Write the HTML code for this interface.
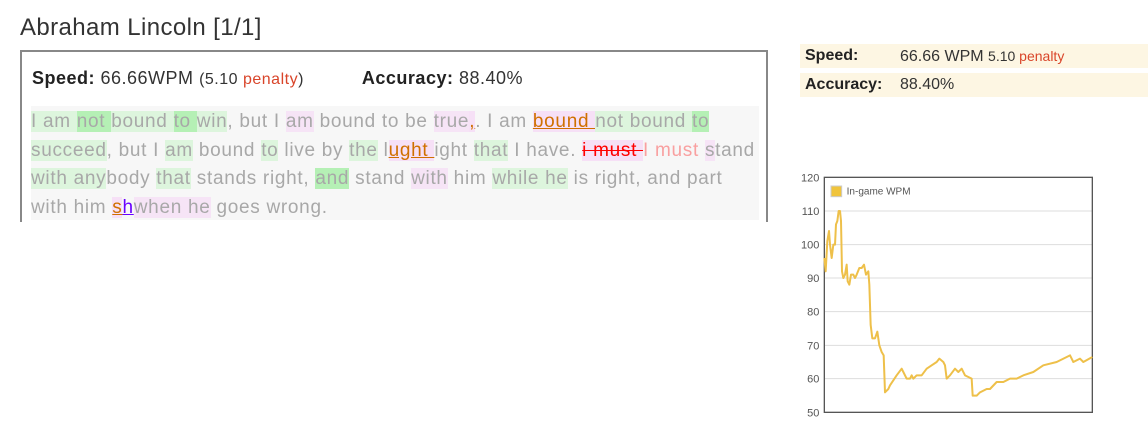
<!DOCTYPE html>
<html><head><meta charset="utf-8"><style>
body{margin:0;width:1148px;height:426px;background:#fff;font-family:"Liberation Sans","DejaVu Sans",sans-serif;position:relative;overflow:hidden}
h1{position:absolute;left:20px;top:14px;margin:0;font-weight:normal;font-size:24px;letter-spacing:0.4px;color:#333}
.box{position:absolute;left:20px;top:50px;width:748px;height:172px;border:2px solid #888;border-bottom:none;box-sizing:border-box}
.stats{position:absolute;left:10px;top:16px;font-size:18px;color:#333;white-space:nowrap;letter-spacing:0.5px}
.stats b{color:#222}
.pen{color:#d9452a}
.txt{position:absolute;left:9px;top:54px;width:728px;height:114px;background:#f7f7f7;font-size:19px;letter-spacing:0.7px;color:#a8a8a8;line-height:28.5px;padding-top:2px;box-sizing:border-box}
.l{white-space:nowrap;height:28.5px}
.g{background:#ddf5dd}.G{background:#b5f0b5}.p{background:#f6e4f6}
.u{color:#d07000;text-decoration:underline;background:#f6e0f6}
.v{color:#6a00ff;text-decoration:underline}
.s{color:#f00;text-decoration:line-through;background:#f6e0f6}
.r{color:#f9a0a0}
.row{position:absolute;left:800px;width:348px;height:24px;background:#fdf6e3;font-size:16px;color:#333;line-height:24px}
.row b{position:absolute;left:5px;color:#222}
.row span.v2{position:absolute;left:100px}
</style></head><body>
<h1>Abraham Lincoln [1/1]</h1>
<div class="box">
<div class="stats"><b>Speed:</b> 66.66WPM <span style="font-size:16px">(5.10 <span class="pen">penalty</span>)</span><span style="display:inline-block;width:58px"></span><b>Accuracy:</b> 88.40%</div>
<div class="txt">
<div class="l"><span class="g">I am </span><span class="G">not </span><span class="g">bound </span><span class="G">to </span><span class="g">win</span>, but I <span class="p">am</span> bound to be <span class="p">true</span><span class="u">,</span>. I am <span class="u">bound </span><span class="g">not bound </span><span class="G">to</span></div>
<div class="l"><span class="g">succeed</span>, but I <span class="g">am</span> bound <span class="g">to</span> live by <span class="g">the</span> l<span class="u">ught </span>ight <span class="g">that</span> I have. <span class="s">i must </span><span class="r">I must</span> <span class="p">s</span>tand</div>
<div class="l"><span class="g">with any</span>body <span class="g">that</span> stands right, <span class="G">and</span> stand <span class="p">with</span> him <span class="g">while he</span> is right, and part</div>
<div class="l">with him <span class="u">s</span><span class="v">h</span><span class="p">when he</span> goes wrong.</div>
</div>
</div>
<div class="row" style="top:44px"><b>Speed:</b><span class="v2">66.66 WPM <span style="font-size:14px">5.10 <span class="pen">penalty</span></span></span></div>
<div class="row" style="top:73px"><b>Accuracy:</b><span class="v2">88.40%</span></div>
<svg style="position:absolute;left:790px;top:160px" width="358" height="266" viewBox="0 0 1074 798">
<g stroke="#ddd" stroke-width="3">
<line x1="103" y1="153" x2="907" y2="153"/><line x1="103" y1="254" x2="907" y2="254"/><line x1="103" y1="354" x2="907" y2="354"/><line x1="103" y1="455" x2="907" y2="455"/><line x1="103" y1="556" x2="907" y2="556"/><line x1="103" y1="656" x2="907" y2="656"/>
</g>
<rect x="103" y="52" width="804" height="705" fill="none" stroke="#555" stroke-width="4"/>
<g font-family="Liberation Sans,sans-serif" font-size="33" fill="#555" text-anchor="end">
<text x="88" y="64">120</text><text x="88" y="165">110</text><text x="88" y="266">100</text><text x="88" y="366">90</text><text x="88" y="467">80</text><text x="88" y="568">70</text><text x="88" y="668">60</text><text x="88" y="769">50</text>
</g>
<rect x="123" y="78" width="32" height="32" fill="#f0c43c" stroke="#ccc" stroke-width="3"/>
<text x="170" y="104" font-family="Liberation Sans,sans-serif" font-size="30" fill="#555">In-game WPM</text>
<polyline fill="none" stroke="#eec04a" stroke-width="6" stroke-linejoin="round" points="103,294 107,334 112,243 117,213 120,254 125,294 130,254 135,254 138,193 142,183 146,153 150,153 153,183 156,334 160,354 165,344 170,314 173,364 178,374 183,344 190,344 195,354 200,344 208,324 215,324 222,314 228,344 235,334 238,374 242,495 247,535 255,535 262,515 268,556 275,576 281,586 285,697 295,687 300,676 320,646 335,626 340,636 350,656 360,656 365,646 370,656 380,646 395,646 410,626 425,616 440,606 448,596 460,606 465,616 470,656 480,646 495,626 505,636 515,626 525,646 545,656 548,707 560,707 570,697 590,687 600,687 620,666 640,666 660,656 680,656 700,646 730,636 760,616 800,606 840,586 850,606 870,596 880,606 907,591"/>
</svg>
</body></html>
